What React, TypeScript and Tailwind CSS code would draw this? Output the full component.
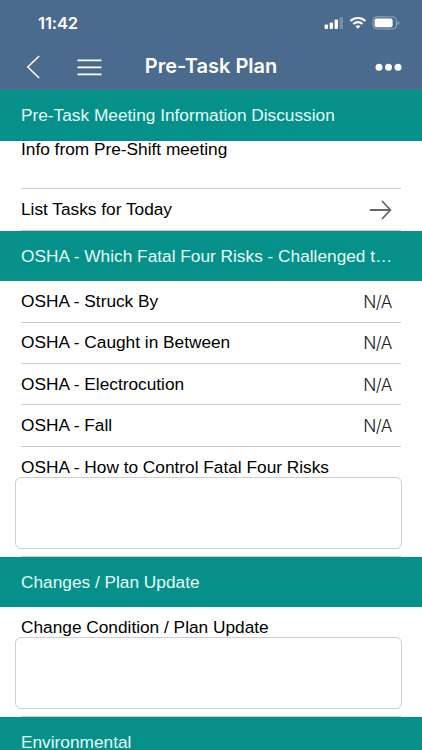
import type { ReactNode } from "react";

const risks = [
  "OSHA - Struck By",
  "OSHA - Caught in Between",
  "OSHA - Electrocution",
  "OSHA - Fall",
];

function StatusBar() {
  return (
    <div className="flex h-[46px] items-center justify-between pl-[38px] pr-[22px]">
      <span className="font-['Inter',sans-serif] text-[16.5px] font-semibold leading-none tracking-[-0.1px]">
        11:42
      </span>
      <svg width="76" height="14" viewBox="0 0 76 14" fill="currentColor">
        <rect x="0.6" y="8.5" width="3.4" height="4.5" rx="0.9" />
        <rect x="5.6" y="6.4" width="3.4" height="6.6" rx="0.9" />
        <rect x="10.6" y="3.6" width="3.4" height="9.4" rx="0.9" />
        <rect x="15.6" y="0.9" width="3.4" height="12.1" rx="0.9" opacity="0.25" />
        <g fill="none" stroke="currentColor" strokeWidth="2.2">
          <path d="M26.5 5a10.6 10.6 0 0 1 14.8 0" />
          <path d="M29.3 8a6.6 6.6 0 0 1 9.2 0" />
        </g>
        <path d="M33.9 12.8 31.5 10.3a3.5 3.5 0 0 1 4.8 0Z" />
        <rect x="49" y="0.9" width="23.4" height="12" rx="3.4" fill="none" stroke="currentColor" opacity="0.42" />
        <rect x="50.6" y="2.5" width="18" height="8.8" rx="1.8" />
        <path d="M73.7 5v3.9c1-.4 1.5-1.1 1.5-1.95s-.5-1.6-1.5-1.95Z" opacity="0.45" />
      </svg>
    </div>
  );
}

function NavBar() {
  return (
    <div className="grid h-[42px] grid-cols-[144px_1fr_144px] items-center">
      <div className="flex items-center pl-[26px]">
        <button aria-label="Back">
          <svg width="15" height="24" viewBox="0 0 15 24" fill="none" stroke="currentColor" strokeWidth="1.5">
            <path d="M13.2 1 1.8 12l11.4 11" />
          </svg>
        </button>
        <button aria-label="Menu" className="ml-[36px]">
          <svg width="25" height="18" viewBox="0 0 25 18" stroke="currentColor" strokeWidth="1.7">
            <path d="M.5 2.3h24M.5 9.3h24M.5 16.3h24" />
          </svg>
        </button>
      </div>
      <h1 className="-mt-[2px] whitespace-nowrap text-center font-['Inter',sans-serif] text-[20px] font-semibold leading-none">
        Pre-Task Plan
      </h1>
      <button aria-label="More" className="justify-self-end pr-[20px]">
        <svg width="27" height="8" viewBox="0 0 27 8" fill="currentColor">
          <circle cx="4" cy="4.3" r="3.5" />
          <circle cx="13.5" cy="4.3" r="3.5" />
          <circle cx="23" cy="4.3" r="3.5" />
        </svg>
      </button>
    </div>
  );
}

function SectionTitle({ children }: { children: ReactNode }) {
  return (
    <h2 className="h-[50.7px] shrink-0 whitespace-nowrap bg-[#05918a] pl-[21px] leading-[51px] text-[#e4fbf8]">
      {children}
    </h2>
  );
}

function Row({ label, children }: { label: string; children: ReactNode }) {
  return (
    <div className="mx-[21px] flex h-[41.35px] shrink-0 items-center justify-between border-b border-[#cbcbcb] pr-[9px] pt-px">
      <span>{label}</span>
      {children}
    </div>
  );
}

function TextField({ label }: { label: string }) {
  return (
    <div className="h-[110px] shrink-0">
      <label className="block h-[30px] pl-[21px] pt-[10px] leading-[20px]">{label}</label>
      <div className="ml-[15px] mr-[20px] h-[72px] rounded-[6px] border border-[#cfcfcf]" />
      <div className="mx-[21px] mt-[7px] border-b border-[#cbcbcb]" />
    </div>
  );
}

export default function App() {
  return (
    <div className="flex h-[750px] w-[422px] flex-col overflow-hidden bg-white font-['Liberation_Sans',Arial,sans-serif] text-[17.27px] text-black">
      <header className="h-[90px] shrink-0 bg-[#4a6b8e] text-white">
        <StatusBar />
        <NavBar />
      </header>

      <SectionTitle>Pre-Task Meeting Information Discussion</SectionTitle>
      <div className="mx-[21px] h-[48.6px] shrink-0 border-b border-[#cbcbcb]">
        <div className="h-[17px] overflow-hidden leading-[17px]">Info from Pre-Shift meeting</div>
      </div>
      <Row label="List Tasks for Today">
        <svg width="23" height="20" viewBox="0 0 23 20" fill="none" stroke="#666" strokeWidth="1.8" strokeLinecap="round" strokeLinejoin="round">
          <path d="M1.5 10h20M13.5 1.5l8 8.5-8 8.5" />
        </svg>
      </Row>

      <SectionTitle>OSHA - Which Fatal Four Risks - Challenged t…</SectionTitle>
      {risks.map((risk) => (
        <Row key={risk} label={risk}>
          <span className="font-['Inter',sans-serif] font-light tracking-[-0.5px] text-[#222]">N/A</span>
        </Row>
      ))}
      <TextField label="OSHA - How to Control Fatal Four Risks" />

      <SectionTitle>Changes / Plan Update</SectionTitle>
      <TextField label="Change Condition / Plan Update" />

      <SectionTitle>Environmental</SectionTitle>
    </div>
  );
}
